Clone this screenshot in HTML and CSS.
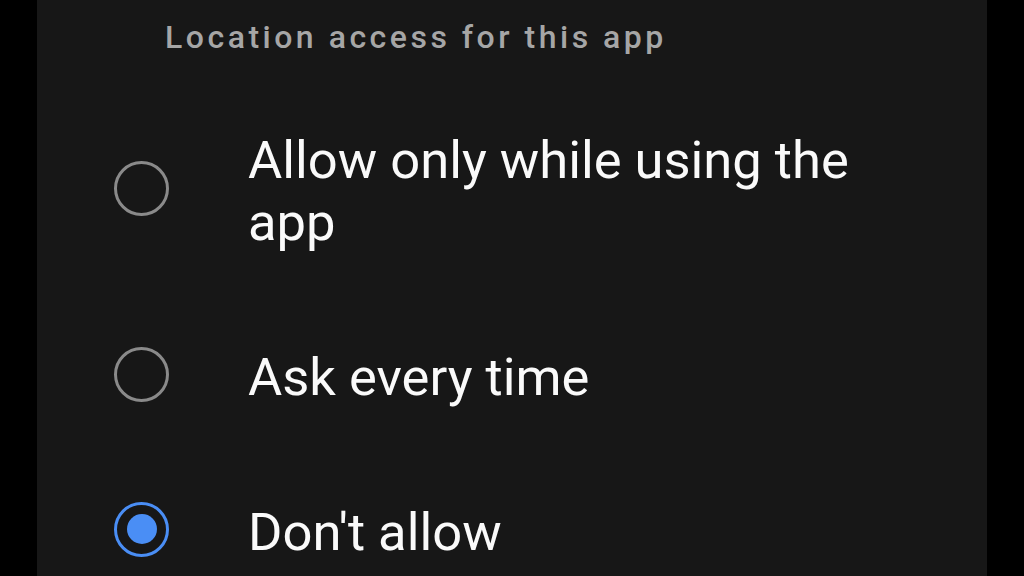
FILE: index.html
```html
<!DOCTYPE html>
<html lang="en">
<head>
    <meta charset="UTF-8">
    <meta name="viewport" content="width=device-width, initial-scale=1.0">
    <title>Location permission</title>
    <link rel="stylesheet" href="styles.css">
</head>
<body>
    <div class="panel">
        <h2 class="section-title">Location access for this app</h2>

        <div class="options">
            <label class="option">
                <span class="radio"></span>
                <span class="option-text">Allow only while using the app</span>
            </label>

            <label class="option">
                <span class="radio"></span>
                <span class="option-text">Ask every time</span>
            </label>

            <label class="option">
                <span class="radio checked"></span>
                <span class="option-text">Don't allow</span>
            </label>
        </div>
    </div>
</body>
</html>
```

FILE: styles.css
```css
html, body {
    height: 100%;
}

body {
    margin: 0;
    background: #000;
    font-family: Roboto, "Noto Sans", sans-serif;
    overflow: hidden;
}

.panel {
    margin: 0 37px;
    height: 100%;
    background: #171717;
    padding: 0 0 0 77px;
    box-sizing: border-box;
}

.section-title {
    margin: 0;
    padding: 17px 0 0 51px;
    font-size: 32px;
    line-height: 40px;
    font-weight: 500;
    letter-spacing: 3.5px;
    color: #a6a6a6;
}

.options {
    display: flex;
    flex-direction: column;
    gap: 93px;
    margin-top: 72px;
}

.option {
    display: flex;
    align-items: center;
    gap: 79px;
}

.radio {
    flex: none;
    width: 55px;
    height: 55px;
    margin-bottom: 6px;
    border: 3px solid #8a8a8a;
    border-radius: 50%;
    box-sizing: border-box;
    position: relative;
}

.radio.checked {
    border-color: #4a8ef5;
}

.radio.checked::after {
    content: "";
    position: absolute;
    left: 50%;
    top: 50%;
    width: 30px;
    height: 30px;
    margin: -15px 0 0 -15px;
    border-radius: 50%;
    background: #4a8ef5;
}

.option-text {
    font-size: 52.5px;
    line-height: 62px;
    color: #fafafa;
    max-width: 640px;
}
```
